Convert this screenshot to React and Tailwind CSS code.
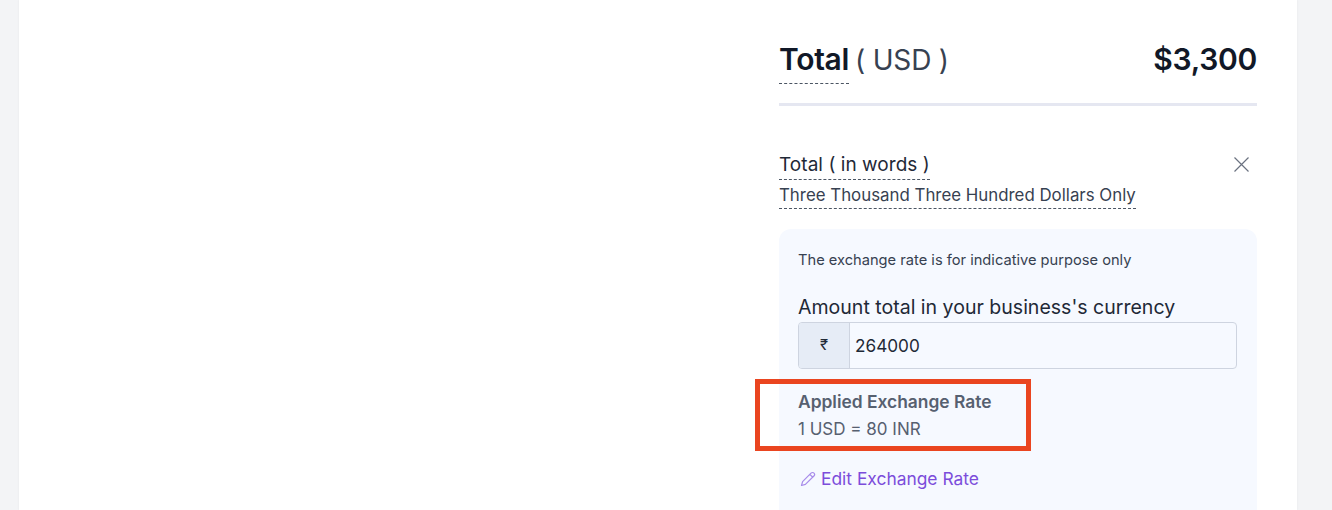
import React from "react";

export default function App() {
  return (
    <div className="h-[510px] overflow-hidden bg-[#f3f4f6] pl-[19px] pr-[35px] font-['Inter','Liberation_Sans',sans-serif] text-[#1f2937]">
      <div className="h-full bg-white pr-[40px] shadow-[0_0_2px_rgba(0,0,0,0.06)] flex justify-end">
        <div className="w-[478px] pt-[40px]">
          <div className="flex justify-between items-start h-[66px] border-b-[3px] border-[#e5e7f1]">
            <div className="text-[30px] leading-[38px] text-[#111827] whitespace-nowrap">
              <span className="inline-block font-semibold border-b border-dashed border-[#4b5563] pb-[5px] tracking-[-0.3px]">Total</span>
              <span className="ml-[6px] text-[#374151] text-[28px] tracking-[-0.2px]">( USD )</span>
            </div>
            <div className="text-[30px] leading-[38px] font-semibold text-[#111827] tracking-[-0.3px]">$3,300</div>
          </div>

          <div className="mt-[44px] flex justify-between items-start">
            <div>
              <div className="inline-block border-b border-dashed border-[#4b5563] text-[19px] leading-[29px] tracking-[0.05px] text-[#1f2937] whitespace-nowrap">Total ( in words )</div>
              <div className="w-fit border-b border-dashed border-[#4b5563] pt-[2px] text-[16.85px] leading-[26px] text-[#374151] whitespace-nowrap">Three Thousand Three Hundred Dollars Only</div>
            </div>
            <svg className="mt-[6px] mr-[7px]" width="17" height="17" viewBox="0 0 17 17" fill="none" stroke="#6b7280" strokeWidth="1.2">
              <path d="M1.5 1.5 L15.5 15.5 M15.5 1.5 L1.5 15.5" />
            </svg>
          </div>

          <div className="mt-[20px] h-[320px] rounded-[12px] bg-[#f6f9ff] px-[19px] pt-[21px]">
            <div className="text-[14.66px] leading-[20px] text-[#374151] whitespace-nowrap">The exchange rate is for indicative purpose only</div>
            <div className="mt-[24px] text-[19.55px] leading-[26px] text-[#1f2937] whitespace-nowrap">Amount total in your business's currency</div>
            <div className="mt-[2px] flex h-[47px] w-[439px] rounded-[4px] border border-[#ced4e0] overflow-hidden">
              <div className="flex w-[51px] items-center justify-center border-r border-[#ced4e0] bg-[#e6ecf6] text-[15px] text-[#1f2937]">₹</div>
              <div className="flex flex-1 items-center pl-[5px] text-[17.2px] text-[#1f2937]">264000</div>
            </div>
            <div className="relative mt-[22px]">
              <div className="text-[17.4px] leading-[22px] font-semibold text-[#566070] whitespace-nowrap">Applied Exchange Rate</div>
              <div className="mt-[5px] text-[17px] leading-[22px] text-[#566070] whitespace-nowrap">1 USD = 80 INR</div>
              <div className="absolute left-[-43px] top-[-12px] h-[72px] w-[276px] border-[5px] border-[#ea4520]"></div>
            </div>
            <div className="mt-[27px] flex items-center text-[17.4px] leading-[24px] text-[#7c4ddb] whitespace-nowrap">
              <svg className="mr-[5px] ml-[2px]" width="16" height="16" viewBox="0 0 16 16" fill="none" stroke="#a78bea" strokeWidth="1.2" strokeLinejoin="round">
                <path d="M1.5 14.5 L2.6 10.6 L11 2.2 C11.9 1.3 13.2 1.3 14 2.1 C14.8 2.9 14.8 4.1 13.9 5 L5.4 13.4 Z M9.8 3.4 L12.8 6.2" />
              </svg>
              Edit Exchange Rate
            </div>
          </div>
        </div>
      </div>
    </div>
  );
}
